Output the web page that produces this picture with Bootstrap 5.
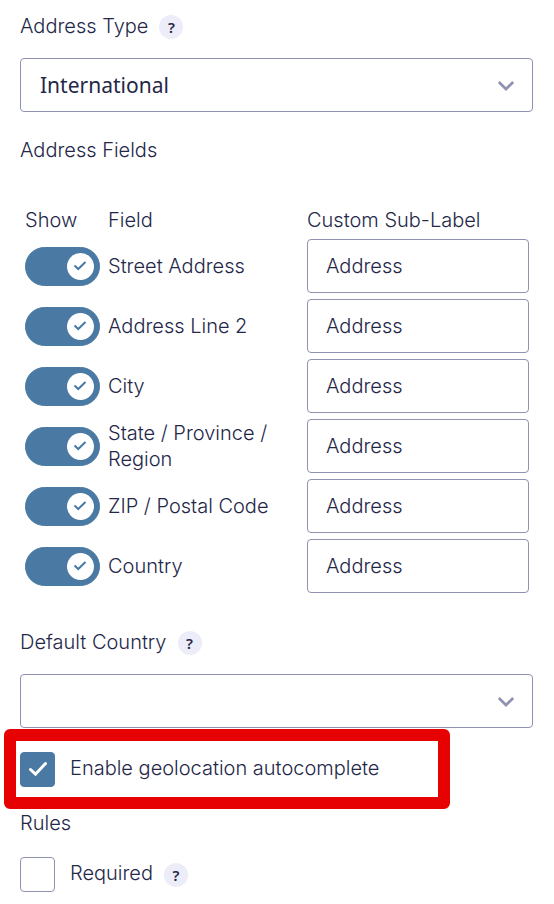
<!DOCTYPE html>
<html lang="en">
<head>
<meta charset="utf-8">
<meta name="viewport" content="width=device-width, initial-scale=1">
<title>Address field settings</title>
<link href="https://cdn.jsdelivr.net/npm/bootstrap@5.3.0/dist/css/bootstrap.min.css" rel="stylesheet">
<style>
  :root { --ink: #242748; --line: #9092b2; --accent: #4a7aa3; }
  body { font-family: Inter, "Liberation Sans", sans-serif; font-size: 20px; font-weight: 300; line-height: 26px; color: var(--ink); }
  .settings { padding: 14px 21px 12px 20px; }
  .label-row { gap: 11px; margin-bottom: 18px; }
  .label-row label { padding-bottom: 2px; line-height: 24px; }
  .tick-row label { padding-bottom: 3px; line-height: 24px; }
  .section-title { font-size: 20px; font-weight: 300; line-height: 26px; margin: 25px 0 0; }
  .rules-title { margin: 1px 0 21px; }
  .help { width: 24px; height: 24px; background: #ecedf8; color: var(--ink); font: 600 15px/24px "Noto Sans", sans-serif; }
  .form-select, .form-control { height: 54px; border-color: var(--line); border-radius: 4px; color: var(--ink); padding: 0 18px; font-size: 20px; font-weight: 300; }
  .form-select { font-family: "Noto Sans", sans-serif; font-size: 21px; font-weight: 400; padding: 2px 50px 0 19px;
    background-image: url("data:image/svg+xml,%3Csvg xmlns='http://www.w3.org/2000/svg' viewBox='0 0 18 12'%3E%3Cpath d='M1.8 3l7.2 7 7.2-7' fill='none' stroke='%239092b2' stroke-width='2.7'/%3E%3C/svg%3E");
    background-size: 18px 12px; background-position: right 17px center; }
  .field-table { width: 100%; table-layout: fixed; margin: 41px 0 34px; }
  .field-table th { font-weight: 300; padding: 3px 4px; }
  .field-table td { padding: 3px 4px; height: 60px; }
  .field-table tr > :first-child { padding-left: 5px; }
  .col-show { width: 84px; }
  .col-field { width: 199px; }
  .form-check-input { margin: 0; flex: none; border-color: var(--line); }
  .form-check-input:checked { background-color: var(--accent); border-color: var(--accent); }
  .form-switch .form-check-input { display: block; float: none; width: 75px; height: 39px; margin: 0; }
  .form-switch .form-check-input:checked { background-origin: border-box; background-position: center; background-size: 75px 39px;
    background-image: url("data:image/svg+xml,%3Csvg xmlns='http://www.w3.org/2000/svg' viewBox='0 0 75 39'%3E%3Ccircle cx='55.5' cy='19.5' r='13.5' fill='white'/%3E%3Cpath d='M49.5 18.5l3.7 3.5 7.3-7' fill='none' stroke='%234a7aa3' stroke-width='2'/%3E%3C/svg%3E"); }
  .form-check-input.tick-box { width: 35px; height: 35px; border-radius: 4px; }
  .tick-box:checked[type=checkbox] { background-origin: border-box; background-size: 35px 35px; background-position: center;
    background-image: url("data:image/svg+xml,%3Csvg xmlns='http://www.w3.org/2000/svg' viewBox='0 0 35 35'%3E%3Cpath d='M10.5 17.5l5 4.7 10-10.7' fill='none' stroke='white' stroke-width='3' stroke-linecap='round'/%3E%3C/svg%3E"); }
  .tick-row { gap: 15px; }
  .tick-label { gap: 11px; }
  .highlight { width: fit-content; max-width: 100%; margin: 1px 0 0 -16px; border: 12px solid #e60202; border-radius: 6px; padding: 11px 59px 10px 4px; }
</style>
</head>
<body class="bg-white">
<main class="settings">
  <div class="label-row d-flex align-items-center">
    <label for="address-type">Address Type</label>
    <button type="button" class="help btn p-0 border-0 rounded-circle" aria-label="About address type">?</button>
  </div>
  <select id="address-type" class="form-select"><option>International</option></select>

  <h2 class="section-title">Address Fields</h2>
  <table class="field-table">
    <colgroup><col class="col-show"><col class="col-field"><col></colgroup>
    <thead><tr><th scope="col">Show</th><th scope="col">Field</th><th scope="col">Custom Sub-Label</th></tr></thead>
    <tbody>
      <tr><td><div class="form-switch p-0 m-0"><input id="s1" class="form-check-input" type="checkbox" role="switch" checked></div></td><td><label for="s1">Street Address</label></td><td><input class="form-control" type="text" value="Address" aria-label="Street Address sub-label"></td></tr>
      <tr><td><div class="form-switch p-0 m-0"><input id="s2" class="form-check-input" type="checkbox" role="switch" checked></div></td><td><label for="s2">Address Line 2</label></td><td><input class="form-control" type="text" value="Address" aria-label="Address Line 2 sub-label"></td></tr>
      <tr><td><div class="form-switch p-0 m-0"><input id="s3" class="form-check-input" type="checkbox" role="switch" checked></div></td><td><label for="s3">City</label></td><td><input class="form-control" type="text" value="Address" aria-label="City sub-label"></td></tr>
      <tr><td><div class="form-switch p-0 m-0"><input id="s4" class="form-check-input" type="checkbox" role="switch" checked></div></td><td><label for="s4">State / Province / Region</label></td><td><input class="form-control" type="text" value="Address" aria-label="State sub-label"></td></tr>
      <tr><td><div class="form-switch p-0 m-0"><input id="s5" class="form-check-input" type="checkbox" role="switch" checked></div></td><td><label for="s5">ZIP / Postal Code</label></td><td><input class="form-control" type="text" value="Address" aria-label="ZIP sub-label"></td></tr>
      <tr><td><div class="form-switch p-0 m-0"><input id="s6" class="form-check-input" type="checkbox" role="switch" checked></div></td><td><label for="s6">Country</label></td><td><input class="form-control" type="text" value="Address" aria-label="Country sub-label"></td></tr>
    </tbody>
  </table>

  <div class="label-row d-flex align-items-center">
    <label for="default-country">Default Country</label>
    <button type="button" class="help btn p-0 border-0 rounded-circle" aria-label="About default country">?</button>
  </div>
  <select id="default-country" class="form-select"><option></option></select>

  <div class="highlight">
    <div class="tick-row d-flex align-items-center">
      <input id="geo" class="form-check-input tick-box" type="checkbox" checked>
      <label for="geo">Enable geolocation autocomplete</label>
    </div>
  </div>

  <h2 class="section-title rules-title">Rules</h2>
  <div class="tick-row d-flex align-items-center">
    <input id="required" class="form-check-input tick-box" type="checkbox">
    <div class="tick-label d-flex align-items-center">
      <label for="required">Required</label>
      <button type="button" class="help btn p-0 border-0 rounded-circle" aria-label="About required">?</button>
    </div>
  </div>
</main>
<script src="https://cdn.jsdelivr.net/npm/bootstrap@5.3.0/dist/js/bootstrap.bundle.min.js"></script>
</body>
</html>
